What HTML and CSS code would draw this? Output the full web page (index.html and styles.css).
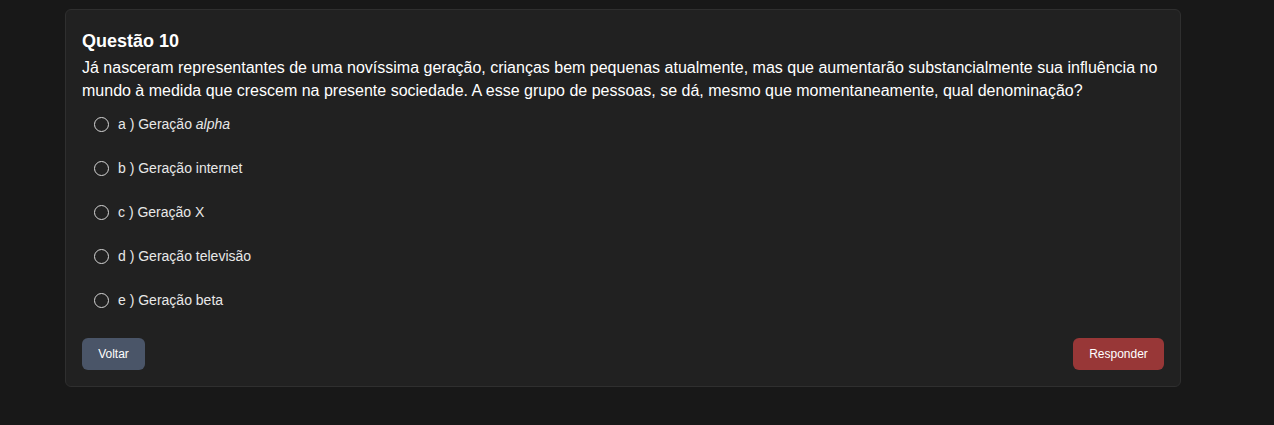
FILE: index.html
```html
<!DOCTYPE html>
<html lang="pt-BR">
<head>
    <meta charset="UTF-8">
    <meta name="viewport" content="width=device-width, initial-scale=1.0">
    <title>Questão 10</title>
    <link rel="stylesheet" href="styles.css">
</head>
<body>
    <div class="page">
        <div class="card">
            <h2 class="title">Questão 10</h2>
            <p class="enunciado">Já nasceram representantes de uma novíssima geração, crianças bem pequenas atualmente, mas que aumentarão substancialmente sua influência no mundo à medida que crescem na presente sociedade. A esse grupo de pessoas, se dá, mesmo que momentaneamente, qual denominação?</p>

            <div class="opcoes">
                <label class="opcao"><span class="radio"></span><span>a ) Geração <em>alpha</em></span></label>
                <label class="opcao"><span class="radio"></span><span>b ) Geração internet</span></label>
                <label class="opcao"><span class="radio"></span><span>c ) Geração X</span></label>
                <label class="opcao"><span class="radio"></span><span>d ) Geração televisão</span></label>
                <label class="opcao"><span class="radio"></span><span>e ) Geração beta</span></label>
            </div>

            <div class="acoes">
                <button class="btn btn-voltar">Voltar</button>
                <button class="btn btn-responder">Responder</button>
            </div>
        </div>
    </div>
</body>
</html>
```

FILE: styles.css
```css
*{
    padding: 0;
    margin: 0;
    box-sizing: border-box;
}
body{
    background-color: #181818;
    color: #fff;
    font-family: "Liberation Sans", Arial, sans-serif;
}
.page{
    padding: 9px 0 0 65px;
}
.card{
    width: 1116px;
    background-color: #212121;
    border: 1px solid #2f2f2f;
    border-radius: 6px;
    padding: 20px 16px 16px;
}
.title{
    font-size: 18px;
    font-weight: bold;
    line-height: 22px;
    margin-bottom: 4px;
}
.enunciado{
    font-size: 16px;
    line-height: 23px;
}

/* alternativas */
.opcoes{
    display: flex;
    flex-direction: column;
}
.opcao{
    display: flex;
    align-items: center;
    gap: 9px;
    height: 44px;
    padding-left: 12px;
    font-size: 14px;
    color: #e8e8e8;
}
.radio{
    width: 15px;
    height: 15px;
    border: 1.5px solid #d6d6d6;
    border-radius: 50%;
    flex-shrink: 0;
}

/* botões */
.acoes{
    display: flex;
    justify-content: space-between;
    margin-top: 16px;
}
.btn{
    height: 32px;
    border: none;
    border-radius: 6px;
    color: #fff;
    font-family: "Liberation Sans", Arial, sans-serif;
    font-size: 12px;
    font-weight: normal;
}
.btn-voltar{
    width: 63px;
    background-color: #4a5568;
}
.btn-responder{
    width: 91px;
    background-color: #983737;
}
```
